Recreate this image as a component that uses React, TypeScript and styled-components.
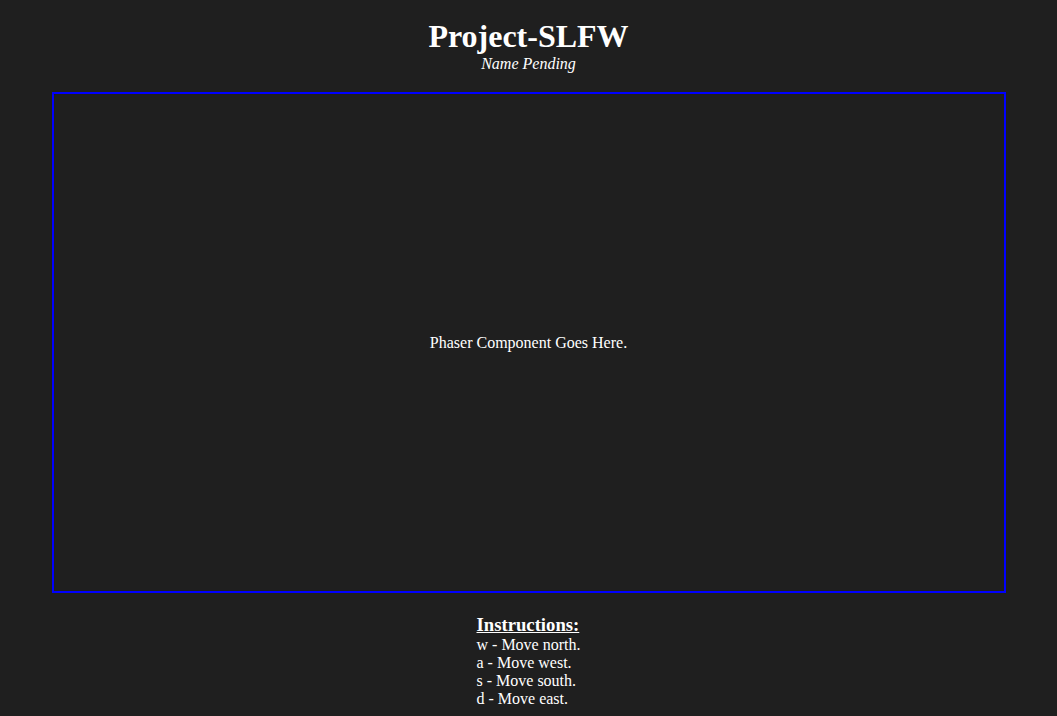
import React from "react";
import styled, { createGlobalStyle } from "styled-components";

const Global = createGlobalStyle`
  html, body { margin: 0; padding: 0; background: #1f1f1f; }
  body { font-family: "Liberation Serif", "Times New Roman", serif; color: #ffffff; }
`;

const Page = styled.div`
  display: flex;
  flex-direction: column;
  align-items: center;
  padding-top: 18px;
`;

const Title = styled.h1`
  margin: 0;
  font-size: 32px;
  font-weight: bold;
  line-height: 37px;
`;

const Subtitle = styled.div`
  font-style: italic;
  font-size: 16px;
  line-height: 18px;
  margin-top: 0;
`;

const GameBox = styled.div`
  box-sizing: border-box;
  margin-top: 19px;
  width: 954px;
  height: 501px;
  border: 2px solid #0000ff;
  display: flex;
  align-items: center;
  justify-content: center;
  font-size: 16px;
`;

const Instructions = styled.div`
  margin-top: 21px;
  display: flex;
  flex-direction: column;
  font-size: 16px;
  line-height: 18px;
`;

const InstrHeading = styled.div`
  font-size: 18.7px;
  font-weight: bold;
  text-decoration: underline;
  line-height: 22px;
`;

const keys = [
  ["w", "Move north."],
  ["a", "Move west."],
  ["s", "Move south."],
  ["d", "Move east."],
];

export default function App() {
  return (
    <>
      <Global />
      <Page>
        <Title>Project-SLFW</Title>
        <Subtitle>Name Pending</Subtitle>
        <GameBox>Phaser Component Goes Here.</GameBox>
        <Instructions>
          <InstrHeading>Instructions:</InstrHeading>
          {keys.map(([k, t]) => (
            <div key={k}>
              {k} - {t}
            </div>
          ))}
        </Instructions>
      </Page>
    </>
  );
}
